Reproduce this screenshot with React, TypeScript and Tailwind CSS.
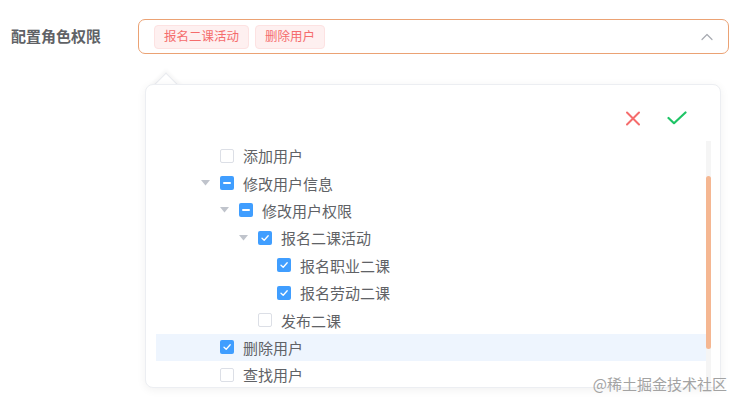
import React from "react";

type Node = {
  label: string;
  level: number;
  state: "none" | "half" | "checked";
  expandable?: boolean;
  active?: boolean;
};

const rows: Node[] = [
  { label: "添加用户", level: 0, state: "none" },
  { label: "修改用户信息", level: 0, state: "half", expandable: true },
  { label: "修改用户权限", level: 1, state: "half", expandable: true },
  { label: "报名二课活动", level: 2, state: "checked", expandable: true },
  { label: "报名职业二课", level: 3, state: "checked" },
  { label: "报名劳动二课", level: 3, state: "checked" },
  { label: "发布二课", level: 2, state: "none" },
  { label: "删除用户", level: 0, state: "checked", active: true },
  { label: "查找用户", level: 0, state: "none" },
];

const indent = ["pl-[40px]", "pl-[59px]", "pl-[78px]", "pl-[97px]"];

const font = { fontFamily: '"Noto Sans CJK SC", "Noto Sans", sans-serif' };

function Checkbox({ state }: { state: Node["state"] }) {
  if (state === "none") {
    return <span className="w-[14px] h-[14px] rounded-[2px] border border-[#dcdfe6] bg-white shrink-0" />;
  }
  return (
    <span className="w-[14px] h-[14px] rounded-[2px] bg-[#409eff] shrink-0 flex items-center justify-center">
      {state === "half" ? (
        <span className="w-[8px] h-[2px] bg-white rounded-[1px]" />
      ) : (
        <svg width="10" height="10" viewBox="0 0 10 10" fill="none">
          <path d="M2 5.2 L4.2 7.3 L8.2 2.8" stroke="white" strokeWidth="1.3" strokeLinecap="round" strokeLinejoin="round" />
        </svg>
      )}
    </span>
  );
}

function TreeRow({ node }: { node: Node }) {
  return (
    <div
      className={`h-[27.4px] flex items-center ${indent[node.level]} ${
        node.active ? "bg-[#eef5fe]" : ""
      }`}
    >
      <span className="w-[24px] shrink-0 flex items-center">
        {node.expandable && (
          <svg className="ml-[5px]" width="9" height="6" viewBox="0 0 9 6">
            <path d="M0 0 L9 0 L4.5 5.5 Z" fill="#c0c4cc" />
          </svg>
        )}
      </span>
      <Checkbox state={node.state} />
      <span className="ml-[9px] text-[15px] text-[#606266] leading-none">{node.label}</span>
    </div>
  );
}

export default function App() {
  return (
    <div className="relative w-[741px] h-[406px] overflow-hidden bg-white" style={font}>
      {/* form row */}
      <div className="flex items-center pt-[19px]">
        <label className="w-[138px] shrink-0 pl-[11px] text-[15px] font-bold text-[#606266]">配置角色权限</label>
        <div className="w-[591px] h-[35px] rounded-[7px] border border-[#eba274] flex items-center pl-[15px] pr-[15px]">
          <div className="flex items-center gap-[6px] flex-1">
            <span className="h-[24px] px-[9px] rounded-[4px] bg-[#fef0f0] border border-[#fde2e2] text-[12.5px] text-[#f56c6c] flex items-center">
              报名二课活动
            </span>
            <span className="h-[24px] px-[9px] rounded-[4px] bg-[#fef0f0] border border-[#fde2e2] text-[12.5px] text-[#f56c6c] flex items-center">
              删除用户
            </span>
          </div>
          <svg width="12" height="8" viewBox="0 0 12 8" fill="none">
            <path d="M1 6.5 L6 1.5 L11 6.5" stroke="#a8abb2" strokeWidth="1.2" strokeLinecap="round" strokeLinejoin="round" />
          </svg>
        </div>
      </div>

      {/* dropdown popover */}
      <div className="absolute left-[145px] top-[84px] w-[576px] h-[304px]">
        <div className="absolute left-[10px] top-[-7px] w-[22px] h-[22px] rotate-45 bg-white border-l border-t border-[#e8eaee] shadow-[-2px_-2px_4px_rgba(0,0,0,0.04)]" />
        <div className="relative h-full rounded-[8px] bg-white border border-[#eceef2] shadow-[0_2px_10px_rgba(0,0,0,0.06)] overflow-hidden">
          <div className="h-[56px] flex items-start justify-end pt-[26px] pr-[33px] gap-[26px]">
            <svg width="16" height="15" viewBox="0 0 16 15" fill="none">
              <path d="M2 1.5 L14 13.5 M14 1.5 L2 13.5" stroke="#f56c6c" strokeWidth="2" strokeLinecap="round" />
            </svg>
            <svg width="20" height="14" viewBox="0 0 20 14" fill="none">
              <path d="M1.5 7 L7 12.2 L18.5 1.5" stroke="#1fc466" strokeWidth="2.2" strokeLinecap="round" strokeLinejoin="round" />
            </svg>
          </div>
          <div className="flex pl-[10px]">
            <div className="w-[550px] pt-[1px]">
              {rows.map((r) => (
                <TreeRow key={r.label} node={r} />
              ))}
            </div>
            <div className="w-[5px] h-[250px] bg-[#f5f5f5]">
              <div className="mt-[35px] h-[173px] rounded-full bg-[#f5b792]" />
            </div>
          </div>
        </div>
      </div>

      {/* watermark */}
      <div className="absolute right-[14px] top-[374px] text-[15px] leading-[20px] text-[#a3a3a3]">
        @稀土掘金技术社区
      </div>
    </div>
  );
}
